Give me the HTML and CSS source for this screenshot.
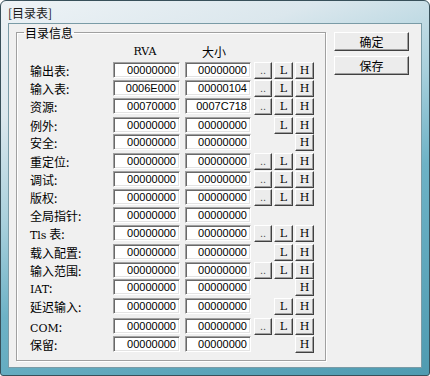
FILE: index.html
```html
<!DOCTYPE html>
<html lang="zh-CN">
<head>
   <meta charset="UTF-8">
   <title>[目录表]</title>
   <link rel="stylesheet" href="styles.css">
</head>
<body>
   <div class="window">
      <div class="titlebar">[目录表]</div>
      <div class="client">
         <fieldset class="group">
            <legend>目录信息</legend>
            <div class="table">
               <span class="head blank"></span>
               <span class="head rva">RVA</span>
               <span class="head size">大小</span>

               <span class="lbl">输出表:</span>
               <span class="edit rv">00000000</span><span class="edit">00000000</span>
               <span class="btn dots">..</span><span class="btn lo">L</span><span class="btn hi">H</span>

               <span class="lbl">输入表:</span>
               <span class="edit rv">0006E000</span><span class="edit">00000104</span>
               <span class="btn dots">..</span><span class="btn lo">L</span><span class="btn hi">H</span>

               <span class="lbl">资源:</span>
               <span class="edit rv">00070000</span><span class="edit">0007C718</span>
               <span class="btn dots">..</span><span class="btn lo">L</span><span class="btn hi">H</span>

               <span class="lbl">例外:</span>
               <span class="edit rv">00000000</span><span class="edit">00000000</span>
               <span class="btn lo">L</span><span class="btn hi">H</span>

               <span class="lbl">安全:</span>
               <span class="edit rv">00000000</span><span class="edit">00000000</span>
               <span class="btn hi">H</span>

               <span class="lbl">重定位:</span>
               <span class="edit rv">00000000</span><span class="edit">00000000</span>
               <span class="btn dots">..</span><span class="btn lo">L</span><span class="btn hi">H</span>

               <span class="lbl">调试:</span>
               <span class="edit rv">00000000</span><span class="edit">00000000</span>
               <span class="btn dots">..</span><span class="btn lo">L</span><span class="btn hi">H</span>

               <span class="lbl">版权:</span>
               <span class="edit rv">00000000</span><span class="edit">00000000</span>
               <span class="btn dots">..</span><span class="btn lo">L</span><span class="btn hi">H</span>

               <span class="lbl">全局指针:</span>
               <span class="edit rv">00000000</span><span class="edit">00000000</span>

               <span class="lbl"><span class="mono">Tls</span> 表:</span>
               <span class="edit rv">00000000</span><span class="edit">00000000</span>
               <span class="btn dots">..</span><span class="btn lo">L</span><span class="btn hi">H</span>

               <span class="lbl">载入配置:</span>
               <span class="edit rv">00000000</span><span class="edit">00000000</span>
               <span class="btn lo">L</span><span class="btn hi">H</span>

               <span class="lbl">输入范围:</span>
               <span class="edit rv">00000000</span><span class="edit">00000000</span>
               <span class="btn dots">..</span><span class="btn lo">L</span><span class="btn hi">H</span>

               <span class="lbl"><span class="mono">IAT</span>:</span>
               <span class="edit rv">00000000</span><span class="edit">00000000</span>
               <span class="btn hi">H</span>

               <span class="lbl">延迟输入:</span>
               <span class="edit rv">00000000</span><span class="edit">00000000</span>
               <span class="btn lo">L</span><span class="btn hi">H</span>

               <span class="lbl"><span class="mono">COM</span>:</span>
               <span class="edit rv">00000000</span><span class="edit">00000000</span>
               <span class="btn dots">..</span><span class="btn lo">L</span><span class="btn hi">H</span>

               <span class="lbl">保留:</span>
               <span class="edit rv">00000000</span><span class="edit">00000000</span>
               <span class="btn hi">H</span>
            </div>
         </fieldset>
         <div class="actions">
            <button class="cmd">确定</button>
            <button class="cmd">保存</button>
         </div>
      </div>
   </div>
</body>
</html>
```

FILE: styles.css
```css
body {
	margin: 0;
	background: #fff;
	font-family: 'Noto Sans CJK SC', sans-serif;
	font-size: 12px;
	color: #000;
}
.window {
	width: 430px;
	height: 376px;
	box-sizing: border-box;
	border: 1px solid #38505a;
	border-radius: 6px 6px 3px 3px;
	background: linear-gradient(160deg, #eef3f6 0%, #dbe7ed 22%, #a9d0dc 42%, #6db2c6 60%, #4f9bb1 100%);
	display: flex;
	flex-direction: column;
	padding: 0 7px 7px 7px;
}
.titlebar {
	height: 22px;
	line-height: 24px;
	font-size: 12px;
	color: #1a1a1a;
}
.client {
	flex: 1;
	display: flex;
	align-items: flex-start;
	background: #f0f0f0;
	border: 1px solid #7a9ba6;
}
.group {
	margin: 1px 0 0 7px;
	padding: 0 10px 6px 13px;
	width: 310px;
	box-sizing: border-box;
	border: 1px solid #a0a0a0;
	box-shadow: inset 1px 1px #fff, 1px 1px #fff;
}
.group legend {
	margin-left: -6px;
	padding: 0 1px;
	font-size: 12px;
	line-height: 15px;
}
.table {
	display: grid;
	grid-template-columns: 83px 72px 69px 20px 21px 19px;
	/* rows in the original dialog are not evenly spaced */
	grid-template-rows: 22px 18px 18px 19px 17px 19px 18px 18px 18px 18px 19px 18px 17px 19px 20px 18px 18px;
	align-items: start;
}
.head {
	grid-row: 1;
	align-self: center;
	text-align: center;
}
.head.blank {
	grid-column: 1;
}
.head.rva {
	grid-column: 2;
	width: 67px;
	font-family: 'DejaVu Serif', serif;
	font-size: 11px;
	padding-right: 3px;
	box-sizing: border-box;
}
.head.size {
	grid-column: 3;
	width: 66px;
	padding-right: 8px;
	box-sizing: border-box;
}
.lbl {
	grid-column: 1;
	line-height: 17px;
	white-space: nowrap;
}
.mono {
	font-family: 'DejaVu Serif', serif;
	font-size: 11px;
}
.edit {
	width: 66px;
	height: 16px;
	box-sizing: border-box;
	background: #fff;
	border-top: 1px solid #a0a0a0;
	border-left: 1px solid #a0a0a0;
	border-right: 1px solid #fff;
	border-bottom: 1px solid #fff;
	box-shadow: inset 1px 1px #696969, inset -1px -1px #e3e3e3;
	font-family: 'Liberation Sans', sans-serif;
	font-size: 11px;
	line-height: 14px;
	text-align: right;
	padding-right: 3px;
}
.edit.rv {
	width: 67px;
}
.btn {
	height: 17px;
	box-sizing: border-box;
	background: #ececec;
	border-top: 1px solid #fff;
	border-left: 1px solid #fff;
	border-right: 1px solid #404040;
	border-bottom: 1px solid #404040;
	box-shadow: inset -1px -1px #a0a0a0;
	text-align: center;
	font-family: 'DejaVu Serif', serif;
	font-size: 11px;
	line-height: 15px;
}
.dots {
	grid-column: 4;
	width: 18px;
	font-family: 'Liberation Sans', sans-serif;
	color: #555;
}
.lo {
	grid-column: 5;
	width: 19px;
}
.hi {
	grid-column: 6;
	width: 19px;
}
.actions {
	display: flex;
	flex-direction: column;
	gap: 5px;
	margin: 8px 0 0 8px;
}
.cmd {
	width: 75px;
	height: 19px;
	padding: 0;
	background: #ececec;
	border-top: 1px solid #fff;
	border-left: 1px solid #fff;
	border-right: 1px solid #404040;
	border-bottom: 1px solid #404040;
	box-shadow: inset -1px -1px #a0a0a0;
	font-family: 'Noto Sans CJK SC', sans-serif;
	font-size: 12px;
	line-height: 15px;
	color: #000;
}
```
